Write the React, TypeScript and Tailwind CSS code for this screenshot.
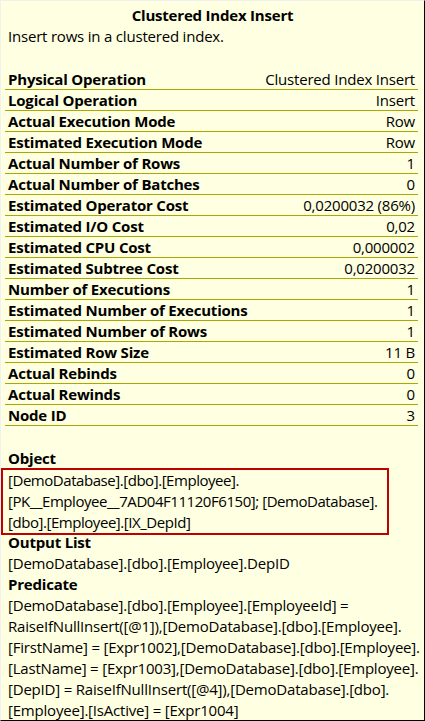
import React from 'react';

const rows: [string, string][] = [
    ['Physical Operation', 'Clustered Index Insert'],
    ['Logical Operation', 'Insert'],
    ['Actual Execution Mode', 'Row'],
    ['Estimated Execution Mode', 'Row'],
    ['Actual Number of Rows', '1'],
    ['Actual Number of Batches', '0'],
    ['Estimated Operator Cost', '0,0200032 (86%)'],
    ['Estimated I/O Cost', '0,02'],
    ['Estimated CPU Cost', '0,000002'],
    ['Estimated Subtree Cost', '0,0200032'],
    ['Number of Executions', '1'],
    ['Estimated Number of Executions', '1'],
    ['Estimated Number of Rows', '1'],
    ['Estimated Row Size', '11 B'],
    ['Actual Rebinds', '0'],
    ['Actual Rewinds', '0'],
    ['Node ID', '3'],
];

const objectLines = [
    '[DemoDatabase].[dbo].[Employee].',
    '[PK__Employee__7AD04F11120F6150]; [DemoDatabase].',
    '[dbo].[Employee].[IX_DepId]',
];

const predicateLines = [
    '[DemoDatabase].[dbo].[Employee].[EmployeeId] =',
    'RaiseIfNullInsert([@1]),[DemoDatabase].[dbo].[Employee].',
    '[FirstName] = [Expr1002],[DemoDatabase].[dbo].[Employee].',
    '[LastName] = [Expr1003],[DemoDatabase].[dbo].[Employee].',
    '[DepID] = RaiseIfNullInsert([@4]),[DemoDatabase].[dbo].',
    '[Employee].[IsActive] = [Expr1004]',
];

export default function App() {
    return (
        <div
            className="w-[425px] h-[721px] overflow-hidden bg-[#ffffe1] border-t border-l border-t-[#f0f0f0] border-l-[#f0f0f0] border-r border-b border-r-black border-b-black text-black text-[15px] leading-[21px] tracking-[-0.2px]"
            style={{ fontFamily: '"Open Sans", "Noto Sans", sans-serif' }}
        >
            <div className="pt-[4px] px-[7px]">
                <div className="text-center font-bold">Clustered Index Insert</div>
                <div>Insert rows in a clustered index.</div>
            </div>

            <div className="mt-[22px] mx-[4px] mr-[6px]">
                {rows.map(([label, value]) => (
                    <div key={label} className="flex justify-between items-center h-[21px] border-b border-[#a9a900] px-[3px]">
                        <span className="font-bold">{label}</span>
                        <span>{value}</span>
                    </div>
                ))}
            </div>

            <div className="mt-[22px] px-[7px] font-bold">Object</div>
            <div className="w-[388px] -mt-[1px] -mb-[3px] border-2 border-[#c00000] px-[5px] tracking-[-0.45px]">
                {objectLines.map((l) => (
                    <div key={l} className="whitespace-nowrap">{l}</div>
                ))}
            </div>

            <div className="px-[7px]">
                <div className="font-bold">Output List</div>
                <div>[DemoDatabase].[dbo].[Employee].DepID</div>
                <div className="font-bold">Predicate</div>
                {predicateLines.map((l) => (
                    <div key={l} className="whitespace-nowrap">{l}</div>
                ))}
            </div>
        </div>
    );
}
